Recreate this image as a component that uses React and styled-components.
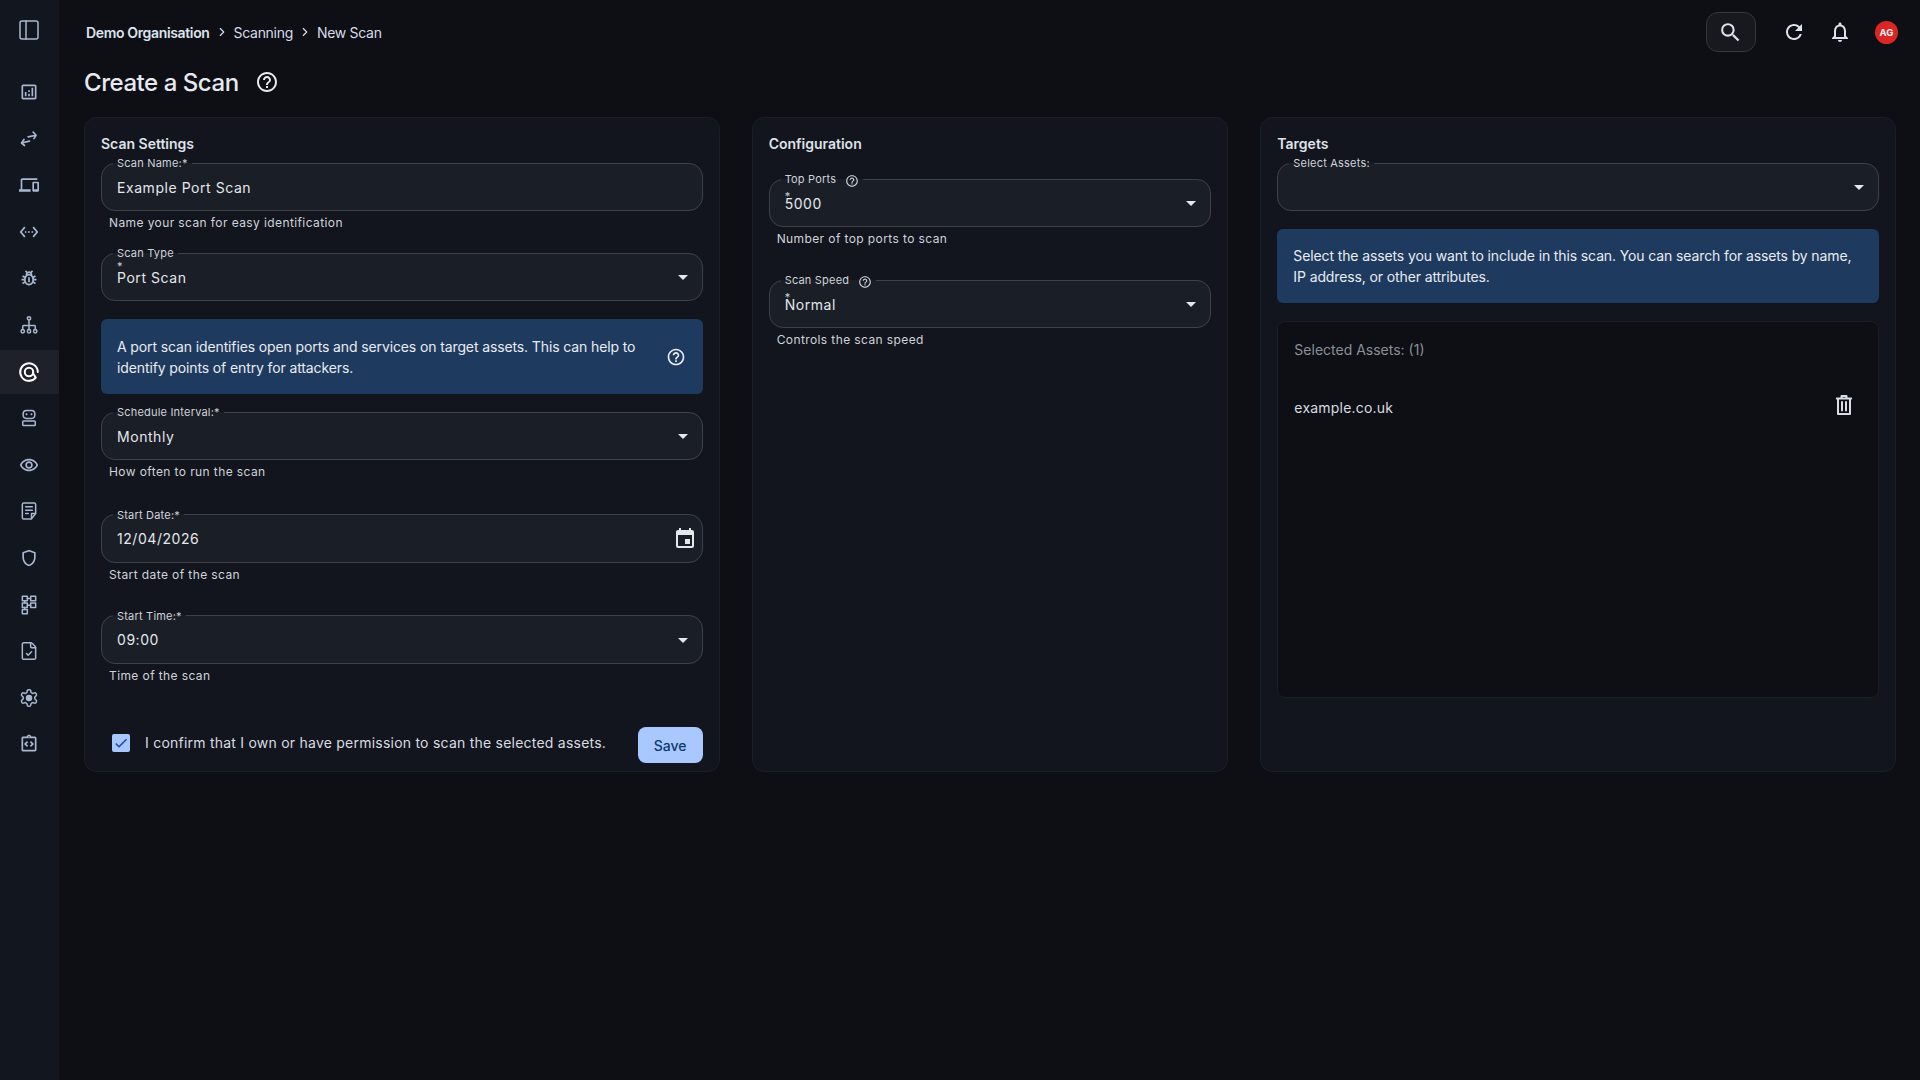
import React from 'react';
import styled, { createGlobalStyle } from 'styled-components';
import { ChevronRight, PanelLeft, FileCheck } from 'lucide-react';
import {
  MdArrowDropDown,
  MdCheck,
  MdEvent,
  MdOutlineAnalytics,
  MdOutlineDevices,
  MdOutlineHelpOutline,
  MdOutlineIntegrationInstructions,
  MdOutlineNotifications,
  MdOutlinePestControl,
  MdOutlineRemoveRedEye,
  MdOutlineSettingsEthernet,
  MdOutlineShield,
  MdRefresh,
  MdSearch,
} from 'react-icons/md';

const GlobalStyle = createGlobalStyle`
  html, body {
    margin: 0;
    background: #0d0f14;
    font-family: Inter, "Liberation Sans", sans-serif;
  }
  * { box-sizing: border-box; }
`;

const Page = styled.div`
  display: flex;
  min-height: 100vh;
  background: #0d0f14;
`;

const Sidebar = styled.nav`
  width: 59px;
  flex-shrink: 0;
  display: flex;
  flex-direction: column;
  background: #12161f;
`;

const ToggleButton = styled.div`
  height: 70px;
  padding: 0 1px 10px 0;
  display: flex;
  align-items: center;
  justify-content: center;
  color: #a9b8d0;
`;

const NavList = styled.div`
  display: flex;
  flex-direction: column;
  gap: 2.6px;
`;

const NavItem = styled.div`
  height: 44px;
  padding-right: 1px;
  display: flex;
  align-items: center;
  justify-content: center;
  color: ${(p) => (p.$active ? '#ffffff' : '#a9b8d0')};
  background: ${(p) => (p.$active ? '#1e2129' : 'transparent')};
`;

const Content = styled.main`
  flex: 1;
  min-width: 0;
  padding: 0 24px 0 25px;
`;

const TopBar = styled.header`
  height: 64px;
  display: flex;
  align-items: center;
  justify-content: space-between;
  margin-right: -2px;
`;

const Breadcrumbs = styled.div`
  display: flex;
  align-items: center;
  padding-left: 2px;
  font-size: 14px;
  letter-spacing: -0.3px;
  color: #d6dce8;
  svg { margin: 0 5px; }
`;

const CrumbStrong = styled.span`
  font-weight: 600;
  letter-spacing: -0.35px;
  color: #dde3ee;
`;

const TopActions = styled.div`
  display: flex;
  align-items: center;
  gap: 22px;
  color: #dde3ee;
  svg { display: block; }
`;

const SearchButton = styled.div`
  width: 50px;
  height: 40px;
  margin-right: 4px;
  padding-right: 2px;
  display: flex;
  align-items: center;
  justify-content: center;
  border: 1px solid #33363d;
  border-radius: 12px;
  background: #17191f;
`;

const Avatar = styled.div`
  width: 23px;
  height: 23px;
  margin-left: 1px;
  border-radius: 50%;
  display: flex;
  align-items: center;
  justify-content: center;
  background: #dc2626;
  color: #f5f5f5;
  font-size: 9.5px;
  font-weight: 700;
`;

const TitleRow = styled.div`
  height: 36px;
  display: flex;
  align-items: center;
  gap: 16px;
  color: #e6e9f0;
`;

const PageTitle = styled.h1`
  margin: 0;
  font-size: 24px;
  font-weight: 500;
  letter-spacing: -0.45px;
`;

const Columns = styled.div`
  margin-top: 17px;
  height: 655px;
  display: grid;
  grid-template-columns: 4fr 3fr 4fr;
  gap: 32px;
`;

const Card = styled.section`
  display: flex;
  flex-direction: column;
  padding: 16px 16px 8px;
  background: #12151d;
  border: 1px solid #1a1e26;
  border-radius: 12px;
`;

const CardTitle = styled.h2`
  margin: 0 0 ${(p) => p.$gap ?? 2}px;
  font-size: 14px;
  line-height: 20px;
  font-weight: 600;
  color: #dfe2e8;
`;

const FieldGroup = styled.div`
  margin-bottom: ${(p) => p.$gap ?? 0}px;
`;

const FieldBox = styled.fieldset`
  position: relative;
  margin: 0;
  padding: 0 0 6px;
  height: 55px;
  min-width: 0;
  display: flex;
  align-items: center;
  background: #1a1e26;
  border: 1px solid #3d4149;
  border-radius: 14px;
  color: #e4e7ec;
`;

const FieldLegend = styled.legend`
  margin-left: 11px;
  padding: 0 4px;
  display: flex;
  align-items: center;
  height: 14px;
  font-size: 11px;
  line-height: 14px;
  letter-spacing: 0.2px;
  color: #cfd3da;
`;

const LegendHelp = styled(MdOutlineHelpOutline)`
  margin-left: 9px;
  position: relative;
  top: 2px;
`;

const FieldValue = styled.div`
  flex: 1;
  padding-left: 15px;
  font-size: 14px;
  letter-spacing: 0.55px;
`;

const FieldIcon = styled.div`
  display: flex;
  margin-right: ${(p) => p.$right ?? 7}px;
  color: #e4e7ec;
`;

const Star = styled.span`
  position: absolute;
  left: 15px;
  top: ${(p) => p.$top}px;
  font-size: 11px;
  line-height: 12px;
  color: #cfd3da;
`;

const HelperText = styled.div`
  margin: 5px 0 0 8px;
  font-size: 12px;
  line-height: 14px;
  letter-spacing: 0.4px;
  color: #cfd3da;
`;

const InfoBox = styled.div`
  min-height: ${(p) => p.$height ?? 75}px;
  margin: ${(p) => p.$margin};
  padding: 0 17px 0 16px;
  display: flex;
  align-items: center;
  gap: 16px;
  background: #1f3a5f;
  border-radius: 6px;
  font-size: 14px;
  line-height: 21px;
  letter-spacing: -0.12px;
  color: #e8ecf2;
`;

const InfoHelp = styled(MdOutlineHelpOutline)`
  flex-shrink: 0;
`;

const ActionRow = styled.div`
  margin-top: auto;
  display: flex;
  align-items: flex-start;
  justify-content: space-between;
`;

const ConfirmLabel = styled.label`
  padding: 6px 0 0 11px;
  display: flex;
  align-items: center;
  gap: 15px;
  font-size: 14px;
  letter-spacing: 0.23px;
  color: #d9dce2;
`;

const CheckBox = styled.span`
  width: 18px;
  height: 18px;
  margin-top: 1px;
  display: flex;
  align-items: center;
  justify-content: center;
  border-radius: 2px;
  background: #a8c7fa;
  color: #1e40af;
`;

const SaveButton = styled.button`
  width: 65px;
  height: 36px;
  border: none;
  border-radius: 8px;
  background: #a8c8ff;
  color: #0f3a6b;
  font-family: inherit;
  font-size: 14px;
  font-weight: 500;
`;

const SelectedPanel = styled.div`
  height: 377px;
  padding: 15px 16px;
  background: #0d0f14;
  border: 1px solid #1a1e26;
  border-radius: 8px;
`;

const SelectedHeading = styled.div`
  padding-top: 3px;
  font-size: 14px;
  line-height: 20px;
  color: #8a8f98;
`;

const AssetRow = styled.div`
  margin-top: 37px;
  display: flex;
  align-items: center;
  justify-content: space-between;
  padding-right: 6px;
  font-size: 14px;
  letter-spacing: 0.2px;
  color: #d8dbe0;
  svg { margin-top: -4px; color: #d8dde5; }
`;

const NavSvg = ({ children, size = 20, weight = 1.8 }) => (
  <svg width={size} height={size} viewBox="0 0 24 24" fill="none" stroke="currentColor" strokeWidth={weight} strokeLinecap="round" strokeLinejoin="round">
    {children}
  </svg>
);

const TrafficIcon = () => (
  <NavSvg weight={2}>
    <path d="M11 9.5l9.5-2M17 3.8l3.5 3.7-2.6 4" />
    <path d="M12.5 14.5l-9.5 2.3M6 12.6l-3 4.2 3.6 3" />
  </NavSvg>
);

const HierarchyIcon = () => (
  <NavSvg>
    <circle cx="12" cy="4" r="2" />
    <path d="M12 6v11.5M4.5 17.5v-4a1 1 0 0 1 1-1h13a1 1 0 0 1 1 1v4" />
    <circle cx="4.5" cy="19.5" r="2" />
    <circle cx="12" cy="19.5" r="2" />
    <circle cx="19.5" cy="19.5" r="2" />
  </NavSvg>
);

const TargetIcon = () => (
  <NavSvg size={22} weight={2.2}>
    <path d="M19.4 18.2A9.6 9.6 0 1 1 21.6 12" />
    <circle cx="12" cy="12" r="4.6" />
    <path d="M16.4 13.5l2.6 4" />
  </NavSvg>
);

const BotIcon = () => (
  <NavSvg>
    <rect x="5" y="3" width="14" height="9.5" rx="4" />
    <rect x="4.5" y="15.5" width="15" height="5.5" rx="1" />
    <path d="M9 7.5h.01M15 7.5h.01" strokeWidth="2.4" />
  </NavSvg>
);

const ReportIcon = () => (
  <NavSvg>
    <path d="M20 15V4a1.5 1.5 0 0 0-1.5-1.5h-13A1.5 1.5 0 0 0 4 4v16a1.5 1.5 0 0 0 1.5 1.5H15l5-6.5h-5v6.5" />
    <path d="M8 7h8M8 11h8M8 15h3" />
  </NavSvg>
);

const ModulesIcon = () => (
  <NavSvg>
    <rect x="4" y="1.5" width="6" height="5.5" />
    <rect x="14" y="1.5" width="6" height="5.5" />
    <rect x="4" y="9.5" width="6" height="5.5" />
    <rect x="14" y="9.5" width="6" height="5.5" />
    <rect x="4" y="17.5" width="6" height="5" />
    <path d="M10 4.2h4M10 12.2h4M7 7v2.5M7 15v2.5" />
  </NavSvg>
);

const GearIcon = () => (
  <NavSvg>
    <path d="M12.22 2h-.44a2 2 0 0 0-2 2v.18a2 2 0 0 1-1 1.73l-.43.25a2 2 0 0 1-2 0l-.15-.08a2 2 0 0 0-2.73.73l-.22.38a2 2 0 0 0 .73 2.73l.15.1a2 2 0 0 1 1 1.72v.51a2 2 0 0 1-1 1.74l-.15.09a2 2 0 0 0-.73 2.73l.22.38a2 2 0 0 0 2.73.73l.15-.08a2 2 0 0 1 2 0l.43.25a2 2 0 0 1 1 1.73V20a2 2 0 0 0 2 2h.44a2 2 0 0 0 2-2v-.18a2 2 0 0 1 1-1.73l.43-.25a2 2 0 0 1 2 0l.15.08a2 2 0 0 0 2.73-.73l.22-.39a2 2 0 0 0-.73-2.73l-.15-.08a2 2 0 0 1-1-1.74v-.5a2 2 0 0 1 1-1.74l.15-.09a2 2 0 0 0 .73-2.73l-.22-.38a2 2 0 0 0-2.73-.73l-.15.08a2 2 0 0 1-2 0l-.43-.25a2 2 0 0 1-1-1.73V4a2 2 0 0 0-2-2z" />
    <circle cx="12" cy="12" r="3" fill="currentColor" />
  </NavSvg>
);

const TrashIcon = () => (
  <NavSvg size={24} weight={2}>
    <path d="M4.8 5.5h14.4M9.5 5.5V3h5v2.5M6 5.5v15.5h12V5.5M10 9v8.5M14 9v8.5" />
  </NavSvg>
);

const navItems = [
  { key: 'analytics', icon: <MdOutlineAnalytics size={20} /> },
  { key: 'traffic', icon: <TrafficIcon /> },
  { key: 'devices', icon: <MdOutlineDevices size={20} /> },
  { key: 'ethernet', icon: <MdOutlineSettingsEthernet size={20} /> },
  { key: 'bugs', icon: <MdOutlinePestControl size={20} /> },
  { key: 'network', icon: <HierarchyIcon /> },
  { key: 'scanning', icon: <TargetIcon />, active: true },
  { key: 'bots', icon: <BotIcon /> },
  { key: 'monitor', icon: <MdOutlineRemoveRedEye size={20} /> },
  { key: 'reports', icon: <ReportIcon /> },
  { key: 'security', icon: <MdOutlineShield size={20} /> },
  { key: 'modules', icon: <ModulesIcon /> },
  { key: 'compliance', icon: <FileCheck size={20} strokeWidth={1.8} /> },
  { key: 'settings', icon: <GearIcon /> },
  { key: 'api', icon: <MdOutlineIntegrationInstructions size={20} /> },
];

function Field({ label, value, helper, help, star, gap, icon = 'select' }) {
  return (
    <FieldGroup $gap={gap}>
      <FieldBox>
        <FieldLegend>
          {label}
          {help && <LegendHelp size={14} />}
        </FieldLegend>
        {star !== undefined && <Star $top={star}>*</Star>}
        <FieldValue>{value}</FieldValue>
        {icon === 'select' && (
          <FieldIcon>
            <MdArrowDropDown size={24} />
          </FieldIcon>
        )}
        {icon === 'date' && (
          <FieldIcon $right={5}>
            <MdEvent size={24} />
          </FieldIcon>
        )}
      </FieldBox>
      {helper && <HelperText>{helper}</HelperText>}
    </FieldGroup>
  );
}

export default function App() {
  return (
    <Page>
      <GlobalStyle />
      <Sidebar>
        <ToggleButton>
          <PanelLeft size={24} strokeWidth={1.5} />
        </ToggleButton>
        <NavList>
          {navItems.map((item) => (
            <NavItem key={item.key} $active={item.active}>
              {item.icon}
            </NavItem>
          ))}
        </NavList>
      </Sidebar>
      <Content>
        <TopBar>
          <Breadcrumbs>
            <CrumbStrong>Demo Organisation</CrumbStrong>
            <ChevronRight size={14} />
            <span>Scanning</span>
            <ChevronRight size={14} />
            <span>New Scan</span>
          </Breadcrumbs>
          <TopActions>
            <SearchButton>
              <MdSearch size={25} />
            </SearchButton>
            <MdRefresh size={24} />
            <MdOutlineNotifications size={24} />
            <Avatar>AG</Avatar>
          </TopActions>
        </TopBar>
        <TitleRow>
          <PageTitle>Create a Scan</PageTitle>
          <MdOutlineHelpOutline size={24} />
        </TitleRow>
        <Columns>
          <Card>
            <CardTitle>Scan Settings</CardTitle>
            <Field label="Scan Name:*" value="Example Port Scan" helper="Name your scan for easy identification" gap={16} icon={null} />
            <Field label="Scan Type" value="Port Scan" star={0} />
            <InfoBox $margin="18px 0 11px">
              <span>A port scan identifies open ports and services on target assets. This can help to identify points of entry for attackers.</span>
              <InfoHelp size={20} />
            </InfoBox>
            <Field label="Schedule Interval:*" value="Monthly" helper="How often to run the scan" gap={28.5} />
            <Field label="Start Date:*" value="12/04/2026" helper="Start date of the scan" gap={27} icon="date" />
            <Field label="Start Time:*" value="09:00" helper="Time of the scan" />
            <ActionRow>
              <ConfirmLabel>
                <CheckBox>
                  <MdCheck size={16} />
                </CheckBox>
                I confirm that I own or have permission to scan the selected assets.
              </ConfirmLabel>
              <SaveButton>Save</SaveButton>
            </ActionRow>
          </Card>
          <Card>
            <CardTitle $gap={18}>Configuration</CardTitle>
            <Field label="Top Ports" help value="5000" star={3.5} helper="Number of top ports to scan" gap={27} />
            <Field label="Scan Speed" help value="Normal" star={4} helper="Controls the scan speed" />
          </Card>
          <Card>
            <CardTitle>Targets</CardTitle>
            <Field label="Select Assets:" value="" />
            <InfoBox $margin="18px 0" $height={74}>
              <span>Select the assets you want to include in this scan. You can search for assets by name, IP address, or other attributes.</span>
            </InfoBox>
            <SelectedPanel>
              <SelectedHeading>Selected Assets: (1)</SelectedHeading>
              <AssetRow>
                example.co.uk
                <TrashIcon />
              </AssetRow>
            </SelectedPanel>
          </Card>
        </Columns>
      </Content>
    </Page>
  );
}
